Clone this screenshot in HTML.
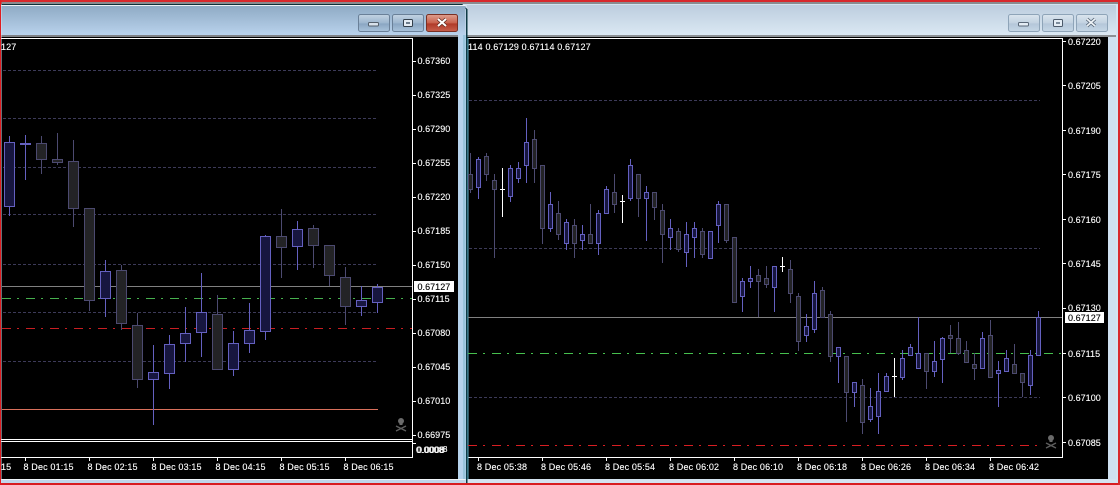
<!DOCTYPE html>
<html><head><meta charset="utf-8">
<style>
html,body{margin:0;padding:0;background:#000;width:1120px;height:485px;overflow:hidden}
svg{display:block}
text{font-family:"Liberation Sans",sans-serif;font-size:9px;fill:#fff;stroke:#fff;stroke-width:.12;letter-spacing:.04px}
.t text{letter-spacing:.15px}
.k{fill:#000;stroke:#000}
</style></head><body>
<svg width="1120" height="485" viewBox="0 0 1120 485" xmlns="http://www.w3.org/2000/svg">
<defs>
<linearGradient id="tl" x1="0" y1="0" x2="0" y2="1"><stop offset="0" stop-color="#8fabc5"/><stop offset="1" stop-color="#b9d2ec"/></linearGradient>
<linearGradient id="tr" x1="0" y1="0" x2="0" y2="1"><stop offset="0" stop-color="#bccdde"/><stop offset="1" stop-color="#dbe8f3"/></linearGradient>
<linearGradient id="bl" x1="0" y1="0" x2="0" y2="1"><stop offset="0" stop-color="#c3d3e2"/><stop offset=".5" stop-color="#9db6cf"/><stop offset=".55" stop-color="#8aa6c2"/><stop offset="1" stop-color="#a9c3dc"/></linearGradient>
<linearGradient id="br" x1="0" y1="0" x2="0" y2="1"><stop offset="0" stop-color="#dbe5ee"/><stop offset=".5" stop-color="#c2d2e1"/><stop offset=".55" stop-color="#b4c7d9"/><stop offset="1" stop-color="#c6d7e6"/></linearGradient>
<linearGradient id="rd" x1="0" y1="0" x2="0" y2="1"><stop offset="0" stop-color="#dfa090"/><stop offset=".5" stop-color="#c8604c"/><stop offset=".55" stop-color="#b03a28"/><stop offset="1" stop-color="#c8604c"/></linearGradient>
<g id="skull">
<circle cx="0" cy="-4" r="3" fill="#6a6a6a"/><rect x="-1.500" y="-2" width="3" height="2" fill="#6a6a6a"/>
<path d="M-5 1L5 6M5 1L-5 6" stroke="#5e5e5e" stroke-width="1.300" fill="none"/>
</g>
</defs>

<!-- background -->
<rect width="1120" height="485" fill="#cfe0ee"/>
<rect x="0" y="0" width="1120" height="2" fill="#d8282c"/>
<rect x="0" y="2" width="1120" height="2" fill="#8a8c90"/>
<rect x="0" y="483" width="1120" height="2" fill="#d81c20"/>
<rect x="0" y="0" width="1.500" height="485" fill="#e01c20"/>
<rect x="1118" y="0" width="2" height="485" fill="#d8282c"/>

<!-- right window -->
<rect x="467" y="4" width="651" height="479" fill="#d4e3f0"/>
<rect x="467" y="5" width="649" height="30" fill="url(#tr)"/>
<rect x="467" y="35" width="649" height="2" fill="#8c9094"/>
<rect x="467" y="37" width="641" height="442" fill="#000"/>
<rect x="1108" y="37" width="8" height="442" fill="#cfe0f0"/>
<rect x="467" y="479" width="651" height="4" fill="#d4e3f0"/>
<path d="M467.500 38.500H1062.500V457.500H467.500" fill="none" stroke="#fff"/>
<g fill="url(#br)" stroke="#8ea4b8">
<rect x="1008.500" y="14.500" width="31" height="17" rx="2"/>
<rect x="1042.500" y="14.500" width="31" height="17" rx="2"/>
<rect x="1076.500" y="14.500" width="31" height="17" rx="2"/>
</g>
<rect x="1018.500" y="22.500" width="10" height="3.500" rx="1" fill="#e4edf5" stroke="#5a6878"/>
<rect x="1053.500" y="19.500" width="9" height="7" rx="1" fill="#e4edf5" stroke="#4c5a6a" stroke-width="1"/>
<rect x="1056" y="22" width="4" height="2" fill="#7c8c9c"/>
<path d="M1087 19L1095 26M1095 19L1087 26" stroke="#5a6878" stroke-width="3.400"/>
<path d="M1087 19L1095 26M1095 19L1087 26" stroke="#eef3f7" stroke-width="1.800"/>

<!-- left window -->
<rect x="1" y="4" width="466" height="479" fill="#cfe0f0"/>
<path d="M1.500 4.500H462L466.500 9V483" fill="none" stroke="#0e3038" stroke-width="1"/>
<rect x="1.500" y="5" width="464" height="1" fill="#eef3f8"/>
<rect x="1.500" y="6" width="464" height="29" fill="url(#tl)"/>
<rect x="1.500" y="35" width="457" height="2" fill="#7e8084"/>
<rect x="1.500" y="37" width="457" height="442" fill="#000"/>
<rect x="458" y="35" width="8" height="444" fill="#b6d3ec"/>
<rect x="463" y="35" width="2.500" height="444" fill="#98c4dc"/>
<rect x="1.500" y="479" width="464" height="1" fill="#f0f4f8"/>
<rect x="1.500" y="480" width="464" height="3" fill="#c0d6ea"/>
<rect x="466" y="9" width="1.500" height="474" fill="#0e3a44"/>
<rect x="467.500" y="38" width="1" height="441" fill="#5fb0c8"/>
<path d="M1.500 38.500H412.500V457.500H1.500" fill="none" stroke="#fff"/>
<g stroke="#6a8098" fill="url(#bl)">
<rect x="358.500" y="14.500" width="31" height="17" rx="2"/>
<rect x="392.500" y="14.500" width="31" height="17" rx="2"/>
</g>
<rect x="426.500" y="14.500" width="31" height="17" rx="2" fill="url(#rd)" stroke="#7a3024"/>
<rect x="368.500" y="22.500" width="10" height="3.500" rx="1" fill="#d8e2ec" stroke="#54606c"/>
<rect x="403.500" y="19.500" width="9" height="7" rx="1" fill="#e4ecf4" stroke="#34404c"/>
<rect x="406" y="22" width="4" height="2" fill="#6c7c8c"/>
<path d="M438 19L446 26M446 19L438 26" stroke="#5a2a20" stroke-width="3.400"/>
<path d="M438 19L446 26M446 19L438 26" stroke="#fff" stroke-width="2"/>
<rect x="1.500" y="439" width="411" height="1" fill="#fff"/>
<rect x="1.500" y="441" width="411" height="1" fill="#fff"/>
<rect x="412" y="441" width="1" height="17" fill="#fff"/>

<!-- LEFT CHART lines -->
<path fill="none" stroke="#3c3a58" stroke-dasharray="3 2" d="M3 70.500H378M3 118.500H378M3 167.500H378M3 214.500H378M3 264.500H378M3 312.500H378M3 361.500H378"/>
<path d="M2 286.500H412" stroke="#808080"/>
<path d="M2 298.500H412" stroke="#46b04e" stroke-dasharray="9 6 2 7"/>
<path d="M2 328.500H412" stroke="#c81e22" stroke-dasharray="9 6 2 7"/>
<path d="M2 409.500H378" stroke="#d8705c"/>

<!-- LEFT bull -->
<path fill="none" stroke="#6460c0" d="M9.500 136V216M25.500 135V180M105.500 260V317M153.500 345V425M169.500 335V389M185.500 307V362M201.500 273V357M233.500 331V376M249.500 303V353M265.500 235V340M297.500 221V270M361.500 286V316M377.500 284V313"/>
<path fill="#17163f" stroke="#6460c0" d="M4.500 142.500h10v64h-10zM20.500 143.500h10v1h-10zM100.500 271.500h10v27h-10zM148.500 372.500h10v7h-10zM164.500 344.500h10v29h-10zM180.500 333.500h10v10h-10zM196.500 312.500h10v20h-10zM228.500 343.500h10v26h-10zM244.500 330.500h10v13h-10zM260.500 236.500h10v95h-10zM292.500 229.500h10v17h-10zM356.500 300.500h10v6h-10zM372.500 287.500h10v15h-10z"/>
<!-- LEFT bear -->
<path fill="none" stroke="#4c4a70" d="M41.500 136V174M57.500 133V165M73.500 140V227M89.500 208V311M121.500 265V330M137.500 313V388M217.500 295V370M281.500 209V278M313.500 225V268M329.500 245V286M345.500 267V325"/>
<path fill="#232326" stroke="#4c4a70" d="M36.500 143.500h10v16h-10zM52.500 159.500h10v3h-10zM68.500 161.500h10v47h-10zM84.500 208.500h10v92h-10zM116.500 270.500h10v53h-10zM132.500 325.500h10v54h-10zM212.500 314.500h10v55h-10zM276.500 236.500h10v11h-10zM308.500 228.500h10v17h-10zM324.500 245.500h10v30h-10zM340.500 277.500h10v29h-10z"/>

<!-- RIGHT CHART lines -->
<path d="M469 100.500H1040M469 248.500H1040M469 397.500H1040" stroke="#3c3a58" stroke-dasharray="3 2" fill="none"/>
<path d="M468 317.500H1062" stroke="#808080"/>
<path d="M468 353.500H1062" stroke="#46c04e" stroke-dasharray="9 6 2 7"/>
<path d="M468 445.500H1040" stroke="#d81e22" stroke-dasharray="9 6 2 7"/>

<!-- RIGHT bull -->
<path fill="none" stroke="#6460c0" d="M478.500 157V199M510.500 165V202M518.500 162V183M526.500 118V183M550.500 192V232M566.500 219V250M582.500 225V250M598.500 210V255M606.500 186V213M630.500 159V201M646.500 186V241M670.500 219V250M686.500 222V267M694.500 222V258M718.500 201V243M742.500 278V312M750.500 266V288M774.500 266V312M806.500 314V342M814.500 281V333M838.500 347V383M854.500 382V407M870.500 388V422M878.500 373V434M886.500 373V391M902.500 350V380M910.500 344V355M918.500 317V368M934.500 341V377M942.500 337V383M982.500 332V368M998.500 361V407M1006.500 350V371M1030.500 350V395M1038.500 311V355"/>
<path fill="#17163f" stroke="#6460c0" d="M476.500 159.500h4v28h-4zM508.500 168.500h4v28h-4zM516.500 168.500h4v10h-4zM524.500 142.500h4v23h-4zM548.500 204.500h4v24h-4zM564.500 222.500h4v21h-4zM580.500 234.500h4v6h-4zM596.500 213.500h4v30h-4zM604.500 189.500h4v24h-4zM628.500 165.500h4v33h-4zM644.500 192.500h4v6h-4zM668.500 228.500h4v9h-4zM684.500 234.500h4v18h-4zM692.500 228.500h4v9h-4zM708.500 231.500h4v27h-4zM716.500 204.500h4v21h-4zM740.500 281.500h4v15h-4zM748.500 278.500h4v3h-4zM772.500 266.500h4v21h-4zM804.500 326.500h4v9h-4zM812.500 293.500h4v36h-4zM836.500 347.500h4v9h-4zM852.500 382.500h4v10h-4zM868.500 406.500h4v13h-4zM876.500 391.500h4v25h-4zM884.500 376.500h4v15h-4zM900.500 358.500h4v19h-4zM908.500 347.500h4v8h-4zM916.500 353.500h4v15h-4zM932.500 361.500h4v10h-4zM940.500 338.500h4v21h-4zM980.500 338.500h4v30h-4zM996.500 370.500h4v3h-4zM1004.500 358.500h4v13h-4zM1028.500 355.500h4v30h-4zM1036.500 317.500h4v38h-4z"/>
<!-- RIGHT bear -->
<path fill="none" stroke="#4c4a70" d="M470.500 153V193M486.500 153V181M494.500 174V258M534.500 130V183M542.500 165V244M558.500 201V240M574.500 219V258M590.500 204V244M614.500 174V213M638.500 174V217M654.500 192V220M662.500 204V263M678.500 228V252M702.500 228V258M726.500 204V243M758.500 269V317M766.500 266V288M790.500 260V303M798.500 293V351M822.500 287V317M830.500 311V362M846.500 356V422M862.500 379V434M926.500 353V389M950.500 325V353M958.500 322V355M966.500 341V362M974.500 353V380M990.500 320V377M1014.500 344V373M1022.500 373V397"/>
<path fill="#232326" stroke="#4c4a70" d="M468.500 174.500h4v15h-4zM484.500 156.500h4v18h-4zM492.500 180.500h4v9h-4zM532.500 139.500h4v29h-4zM540.500 165.500h4v63h-4zM556.500 213.500h4v21h-4zM572.500 225.500h4v18h-4zM588.500 234.500h4v9h-4zM612.500 192.500h4v12h-4zM636.500 174.500h4v24h-4zM652.500 192.500h4v15h-4zM660.500 210.500h4v24h-4zM676.500 231.500h4v18h-4zM700.500 231.500h4v23h-4zM724.500 204.500h4v36h-4zM732.500 237.500h4v65h-4zM756.500 275.500h4v6h-4zM764.500 278.500h4v6h-4zM788.500 269.500h4v24h-4zM796.500 296.500h4v45h-4zM820.500 290.500h4v27h-4zM828.500 314.500h4v42h-4zM844.500 356.500h4v36h-4zM860.500 385.500h4v37h-4zM924.500 353.500h4v18h-4zM948.500 335.500h4v3h-4zM956.500 338.500h4v15h-4zM964.500 350.500h4v12h-4zM972.500 364.500h4v4h-4zM988.500 335.500h4v42h-4zM1012.500 364.500h4v9h-4zM1020.500 373.500h4v9h-4z"/>
<!-- white doji -->
<path fill="none" stroke="#fff" d="M502.500 168V217M500 189.500h5M622.500 195V223M620 201.500h5M782.500 257V272M780 266.500h5M894.500 358V397M892 376.500h5"/>

<!-- axis ticks left -->
<path stroke="#fff" d="M413 61.500h3M413 95.500h3M413 129.500h3M413 163.500h3M413 197.500h3M413 231.500h3M413 265.500h3M413 299.500h3M413 333.500h3M413 367.500h3M413 401.500h3M413 435.500h3M413 443.500h3M25.500 458v3M89.500 458v3M153.500 458v3M217.500 458v3M281.500 458v3M345.500 458v3"/>
<!-- axis ticks right -->
<path stroke="#fff" d="M1063 41.500h3M1063 85.500h3M1063 130.500h3M1063 174.500h3M1063 219.500h3M1063 263.500h3M1063 308.500h3M1063 353.500h3M1063 397.500h3M1063 442.500h3M478.500 458v3M542.500 458v3M606.500 458v3M670.500 458v3M734.500 458v3M798.500 458v3M862.500 458v3M926.500 458v3M990.500 458v3"/>

<!-- left axis labels -->
<g>
<text x="417.500" y="64">0.67360</text>
<text x="417.500" y="98">0.67325</text>
<text x="417.500" y="132">0.67290</text>
<text x="417.500" y="166">0.67255</text>
<text x="417.500" y="200">0.67220</text>
<text x="417.500" y="234">0.67185</text>
<text x="417.500" y="268">0.67150</text>
<text x="417.500" y="302">0.67115</text>
<text x="417.500" y="336">0.67080</text>
<text x="417.500" y="370">0.67045</text>
<text x="417.500" y="404">0.67010</text>
<text x="417.500" y="438">0.66975</text>
<text x="416" y="453">0.0008</text>
<text x="417" y="453">0.0008</text>
<text x="443" y="452" style="font-size:8px">8</text>
</g>
<rect x="414" y="281" width="40" height="11" fill="#fff"/>
<text x="417.500" y="290" class="k">0.67127</text>

<g class="t">
<text x="1" y="50">127</text>
<text x="468" y="50">114 0.67129 0.67114 0.67127</text>
</g>

<!-- right axis labels -->
<g>
<text x="1068" y="45">0.67220</text>
<text x="1068" y="89">0.67205</text>
<text x="1068" y="134">0.67190</text>
<text x="1068" y="178">0.67175</text>
<text x="1068" y="223">0.67160</text>
<text x="1068" y="267">0.67145</text>
<text x="1068" y="311">0.67130</text>
<text x="1068" y="357">0.67115</text>
<text x="1068" y="401">0.67100</text>
<text x="1068" y="446">0.67085</text>
</g>
<rect x="1065" y="312" width="39" height="11" fill="#fff"/>
<text x="1068" y="321" class="k">0.67127</text>

<!-- time labels -->
<g class="t">
<text x="1" y="470">15</text>
<text x="23.500" y="470">8 Dec 01:15</text>
<text x="87.500" y="470">8 Dec 02:15</text>
<text x="151.500" y="470">8 Dec 03:15</text>
<text x="215.500" y="470">8 Dec 04:15</text>
<text x="279.500" y="470">8 Dec 05:15</text>
<text x="343.500" y="470">8 Dec 06:15</text>
<text x="477" y="470">8 Dec 05:38</text>
<text x="541" y="470">8 Dec 05:46</text>
<text x="605" y="470">8 Dec 05:54</text>
<text x="669" y="470">8 Dec 06:02</text>
<text x="733" y="470">8 Dec 06:10</text>
<text x="797" y="470">8 Dec 06:18</text>
<text x="861" y="470">8 Dec 06:26</text>
<text x="925" y="470">8 Dec 06:34</text>
<text x="989" y="470">8 Dec 06:42</text>
</g>

<use href="#skull" x="401" y="425"/>
<use href="#skull" x="1051" y="442"/>
</svg>
</body></html>
